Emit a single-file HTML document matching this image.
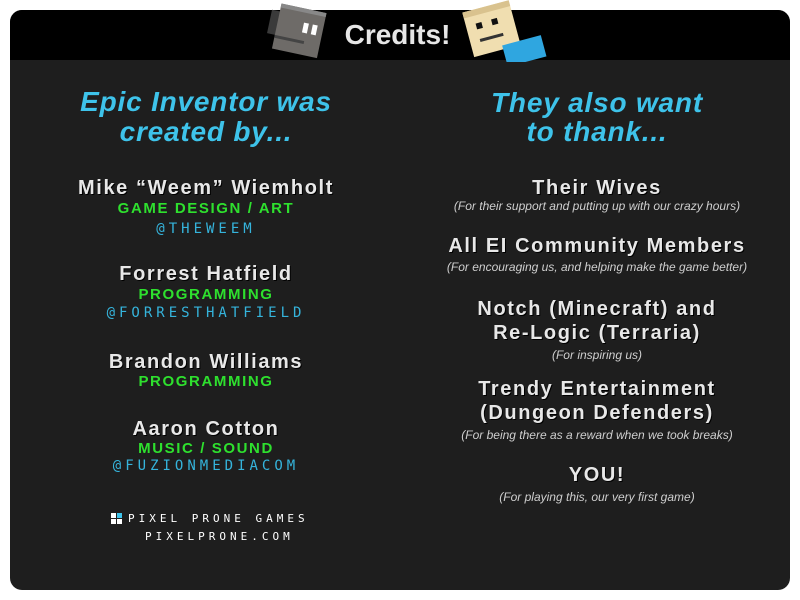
<!DOCTYPE html>
<html><head><meta charset="utf-8"><style>
body{margin:0;width:800px;height:600px;background:#fff;position:relative;overflow:hidden;font-family:"Liberation Sans","DejaVu Sans",sans-serif}
.panel{position:absolute;left:10px;top:10px;width:780px;height:580px;background:#1e1e1e;border-radius:12px;overflow:hidden}
.hdr{position:absolute;left:0;top:0;width:780px;height:50px;background:#000}
.t{position:absolute;text-align:center;white-space:nowrap;line-height:24px}
.L{left:6px;width:400px}
.R{left:397px;width:400px}
.h{font-weight:bold;font-style:italic;font-size:28px;color:#3ec3ea;letter-spacing:0.8px;line-height:30px}
.n{font-weight:bold;font-size:20px;color:#e8e8e8;letter-spacing:1.6px;text-shadow:1px 1px 0 #000}
.g{font-weight:bold;font-size:15px;color:#2ee02e;letter-spacing:1.6px;line-height:18px}
.c{font-family:"DejaVu Sans Mono","Liberation Mono",monospace;font-size:14px;color:#35b4dc;letter-spacing:4px;line-height:18px}
.s{font-style:italic;font-size:12px;color:#cfcfcf;line-height:16px}
.p{font-family:"DejaVu Sans Mono",monospace;font-size:11px;color:#fff;letter-spacing:4px;line-height:16px}
</style></head><body>
<div class="panel"><div class="hdr"></div></div>
<svg style="position:absolute;left:262px;top:0" width="75" height="62" viewBox="0 0 75 62">
<g transform="rotate(12 38 32)">
<rect x="6" y="16" width="10" height="24" fill="#3a3a3a"/>
<rect x="14" y="8" width="46" height="46" fill="#6e6b68"/>
<rect x="14" y="8" width="46" height="4" fill="#888"/>
<rect x="40" y="22" width="5" height="10" fill="#fff"/><rect x="49" y="22" width="5" height="10" fill="#fff"/>
<rect x="14" y="40" width="30" height="3" fill="#444"/>
</g></svg>
<div class="t" style="left:330px;width:135px;top:20px;font-size:28px;font-weight:bold;color:#e6e6e6;line-height:30px">Credits!</div>
<svg style="position:absolute;left:458px;top:0" width="90" height="62" viewBox="0 0 90 62">
<g transform="rotate(-15 40 30)">
<rect x="10" y="4" width="48" height="46" fill="#f0deb0"/>
<rect x="10" y="4" width="48" height="6" fill="#d9c28e"/>
<rect x="20" y="18" width="6" height="6" fill="#111"/><rect x="36" y="18" width="6" height="6" fill="#111"/>
<rect x="20" y="34" width="24" height="3" fill="#333"/>
<rect x="40" y="46" width="40" height="22" fill="#2fa6e0"/>
</g></svg>

<div class="t L h" style="top:87px">Epic Inventor was</div>
<div class="t L h" style="top:117px">created by...</div>
<div class="t L n" style="top:176px">Mike “Weem” Wiemholt</div>
<div class="t L g" style="top:200px">GAME DESIGN / ART</div>
<div class="t L c" style="top:220px">@THEWEEM</div>
<div class="t L n" style="top:262px">Forrest Hatfield</div>
<div class="t L g" style="top:286px">PROGRAMMING</div>
<div class="t L c" style="top:304px">@FORRESTHATFIELD</div>
<div class="t L n" style="top:350px">Brandon Williams</div>
<div class="t L g" style="top:373px">PROGRAMMING</div>
<div class="t L n" style="top:417px">Aaron Cotton</div>
<div class="t L g" style="top:440px">MUSIC / SOUND</div>
<div class="t L c" style="top:457px">@FUZIONMEDIACOM</div>
<svg style="position:absolute;left:111px;top:513px" width="12" height="12"><rect x="0" y="0" width="5" height="5" fill="#fff"/><rect x="6" y="0" width="5" height="5" fill="#3ec3ea"/><rect x="0" y="6" width="5" height="5" fill="#fff"/><rect x="6" y="6" width="5" height="5" fill="#fff"/></svg>
<div class="t p" style="left:128px;top:511px">PIXEL PRONE GAMES</div>
<div class="t p" style="left:145px;top:529px">PIXELPRONE.COM</div>

<div class="t R h" style="top:88px">They also want</div>
<div class="t R h" style="top:117px">to thank...</div>
<div class="t R n" style="top:176px">Their Wives</div>
<div class="t R s" style="top:198px">(For their support and putting up with our crazy hours)</div>
<div class="t R n" style="top:234px">All EI Community Members</div>
<div class="t R s" style="top:259px">(For encouraging us, and helping make the game better)</div>
<div class="t R n" style="top:297px">Notch (Minecraft) and</div>
<div class="t R n" style="top:321px">Re-Logic (Terraria)</div>
<div class="t R s" style="top:347px">(For inspiring us)</div>
<div class="t R n" style="top:377px">Trendy Entertainment</div>
<div class="t R n" style="top:401px">(Dungeon Defenders)</div>
<div class="t R s" style="top:427px">(For being there as a reward when we took breaks)</div>
<div class="t R n" style="top:463px">YOU!</div>
<div class="t R s" style="top:489px">(For playing this, our very first game)</div>
</body></html>
